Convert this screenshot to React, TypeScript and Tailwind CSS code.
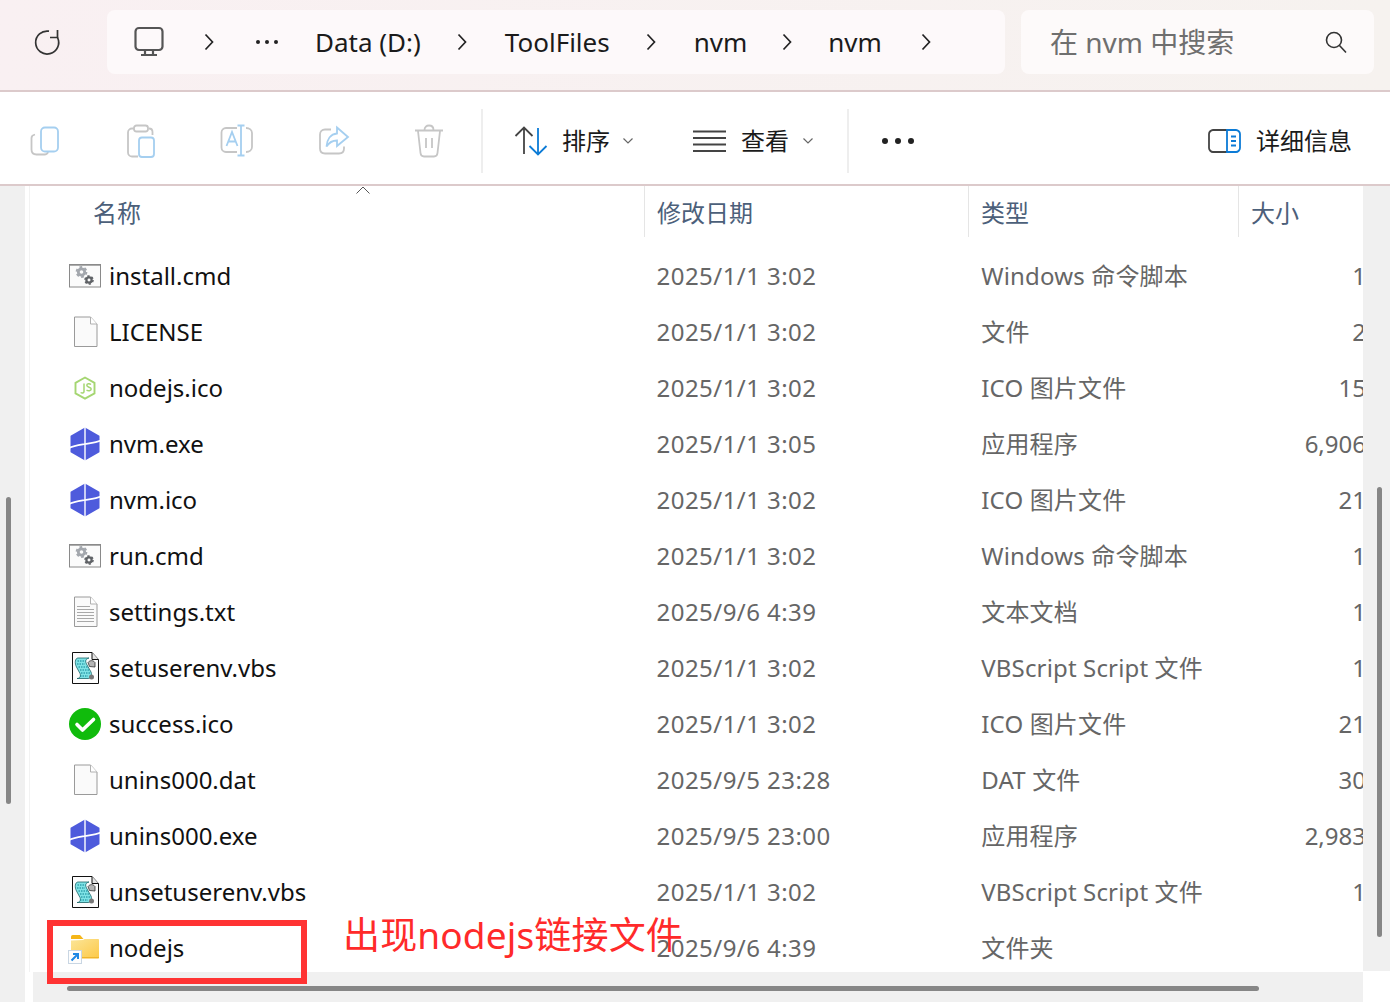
const FONT = "font-['Noto_Sans','Noto_Sans_CJK_SC',sans-serif]";

const files = [
  { name: 'install.cmd', date: '2025/1/1 3:02', type: 'Windows 命令脚本', size: '1', icon: 'cmd' },
  { name: 'LICENSE', date: '2025/1/1 3:02', type: '文件', size: '2', icon: 'blank' },
  { name: 'nodejs.ico', date: '2025/1/1 3:02', type: 'ICO 图片文件', size: '15', icon: 'node' },
  { name: 'nvm.exe', date: '2025/1/1 3:05', type: '应用程序', size: '6,906', icon: 'nvm' },
  { name: 'nvm.ico', date: '2025/1/1 3:02', type: 'ICO 图片文件', size: '21', icon: 'nvm' },
  { name: 'run.cmd', date: '2025/1/1 3:02', type: 'Windows 命令脚本', size: '1', icon: 'cmd' },
  { name: 'settings.txt', date: '2025/9/6 4:39', type: '文本文档', size: '1', icon: 'txt' },
  { name: 'setuserenv.vbs', date: '2025/1/1 3:02', type: 'VBScript Script 文件', size: '1', icon: 'vbs' },
  { name: 'success.ico', date: '2025/1/1 3:02', type: 'ICO 图片文件', size: '21', icon: 'ok' },
  { name: 'unins000.dat', date: '2025/9/5 23:28', type: 'DAT 文件', size: '30', icon: 'blank' },
  { name: 'unins000.exe', date: '2025/9/5 23:00', type: '应用程序', size: '2,983', icon: 'nvm' },
  { name: 'unsetuserenv.vbs', date: '2025/1/1 3:02', type: 'VBScript Script 文件', size: '1', icon: 'vbs' },
  { name: 'nodejs', date: '2025/9/6 4:39', type: '文件夹', size: '', icon: 'link' },
];

function Gear({ x, y, r, fill }: { x: number; y: number; r: number; fill: string }) {
  return (
    <g>
      <circle cx={x} cy={y} r={r * 0.58} fill="none" stroke={fill} strokeWidth={r * 0.5} />
      <circle cx={x} cy={y} r={r * 0.9} fill="none" stroke={fill} strokeWidth={r * 0.34} strokeDasharray={`${r * 0.5} ${r * 0.44}`} />
    </g>
  );
}

function FileIcon({ kind }: { kind: string }) {
  if (kind === 'cmd') {
    return (
      <svg width="34" height="26" viewBox="0 0 34 26">
        <rect x="1.5" y="1.5" width="31" height="22.5" fill="#fbfbfb" stroke="#8a8a8a" />
        <rect x="1.5" y="1.5" width="31" height="1.2" fill="#8a8a8a" />
        <Gear x={13.500} y={9} r={5.500} fill="#a3a7ad" />
        <Gear x={21} y={17} r={4.500} fill="#5f6266" />
      </svg>
    );
  }
  if (kind === 'blank' || kind === 'txt') {
    return (
      <svg width="34" height="32" viewBox="0 0 34 32">
        <path d="M6.500 1h16l6.500 7v22.500h-22.500z" fill="#fafafa" stroke="#9a9a9a" />
        <path d="M22.500 1v7h6.500" fill="#fff" stroke="#b0b0b0" />
        {kind === 'txt' && (
          <path d="M9 10.500h13M9 13.500h17M9 16.500h17M9 19.500h17M9 22.500h17M9 25.500h17" stroke="#a8a8a8" strokeWidth="1" />
        )}
      </svg>
    );
  }
  if (kind === 'node') {
    return (
      <svg width="34" height="26" viewBox="0 0 34 26">
        <path d="M17 2.500l9.500 5.300v10.600l-9.500 5.300-9.500-5.300V7.800z" fill="#fff" stroke="#a5d672" strokeWidth="1.900" />
        <path d="M16 8.500v8c0 1.600-2 2-3.400 1" fill="none" stroke="#a5d672" strokeWidth="1.500" />
        <path d="M23 9.500c-1.500-1.200-4.200-1-4.200.8 0 2.400 4.400 1.400 4.400 3.800 0 1.900-3 2.100-4.700.9" fill="none" stroke="#a5d672" strokeWidth="1.500" />
      </svg>
    );
  }
  if (kind === 'nvm') {
    return (
      <svg width="34" height="34" viewBox="0 0 34 34">
        <path d="M17 1.500l13.500 7.800v15.400l-13.500 7.800-13.500-7.800V9.300z" fill="#4e5bdc" stroke="#4e5bdc" strokeWidth="2" strokeLinejoin="round" />
        <path d="M17 0v34" stroke="#fff" strokeWidth="1.400" />
        <path d="M0 21.500c6-3 11-3.500 17-4.500s11-1.500 17-4" fill="none" stroke="#fff" strokeWidth="1.700" />
      </svg>
    );
  }
  if (kind === 'vbs') {
    return (
      <svg width="34" height="34" viewBox="0 0 34 34">
        <path d="M4.500 1.500h19.500l6.500 7v24h-26z" fill="#fdfdfd" stroke="#111" />
        <path d="M24 1.500v7h6.500" fill="#e4e4e4" stroke="#111" />
        <path d="M10 7h11c-3.500 1-4 3-2.500 6l4.500 8c1.500 3.500-.5 6.500-3 6.500h-11c3 0 4-2.500 3-5l-3.500-6.500c-2-3.500-1.500-9 1.500-9z" fill="#7fe3e6" stroke="#1a6468" strokeWidth="0.800" />
        <path d="M9.500 10h8M9 13h8M10.500 16h9M12 19h9M13 22h9M12 25h8" stroke="#0d8090" strokeWidth="1" strokeDasharray="1.500 1" />
        <path d="M20 11.500c2-2.500 5-2.500 7 0v4.500l-5.500-.5z" fill="#b5b5b5" stroke="#333" strokeWidth="0.800" />
        <circle cx="23.500" cy="26" r="2.500" fill="#777" />
      </svg>
    );
  }
  if (kind === 'ok') {
    return (
      <svg width="34" height="34" viewBox="0 0 34 34">
        <circle cx="17" cy="17" r="16" fill="#10bb0c" />
        <path d="M9 17.500l5.500 5.500 11-10.500" fill="none" stroke="#fff" strokeWidth="3.600" strokeLinecap="round" strokeLinejoin="round" />
      </svg>
    );
  }
  return (
    <svg width="34" height="34" viewBox="0 0 34 34">
      <defs>
        <linearGradient id="folderFill" x1="0" y1="0" x2="1" y2="1">
          <stop offset="0" stopColor="#fbe598" />
          <stop offset="1" stopColor="#fdc947" />
        </linearGradient>
      </defs>
      <path d="M3 6c0-1.200.7-2 1.700-2h7.300l3.500 4h-12.500z" fill="#f5b618" />
      <path d="M3 9.500l12-.5 1.500-1h13.500c.6 0 1 .4 1 1v17c0 1-.6 1.500-1.500 1.500h-25c-1 0-1.500-.6-1.500-1.500z" fill="url(#folderFill)" />
      <path d="M3 26h28v1.200h-28z" fill="#efb42c" />
      <rect x="0.500" y="19.500" width="13" height="13" fill="#fdfdfd" stroke="#c9d6e3" />
      <path d="M3.500 29.500l6-6M5 23h5v5" fill="none" stroke="#1e88e5" strokeWidth="2" />
    </svg>
  );
}

function Chevron() {
  return (
    <svg width="12" height="18" viewBox="0 0 12 18" fill="none" stroke="#222" strokeWidth="1.700">
      <path d="M2.500 1.500l7 7.500-7 7.500" />
    </svg>
  );
}

function SmallCaret() {
  return (
    <svg width="12" height="8" viewBox="0 0 12 8" fill="none" stroke="#666" strokeWidth="1.200">
      <path d="M1.500 1.500l4.500 4.500 4.500-4.500" />
    </svg>
  );
}

function AddressBar() {
  return (
    <div className="flex h-[92px] shrink-0 items-center border-b-2 border-[#dccacb] bg-gradient-to-r from-[#f9f0f2] to-[#f6f2ef] pb-[6px]">
      <div className="flex w-[107px] justify-center pr-[13px]">
        <svg width="28" height="28" viewBox="0 0 28 28" fill="none" stroke="#333" strokeWidth="1.700">
          <path d="M24.500 9.500A11.500 11.500 0 1 1 16 3.200" />
          <path d="M24.500 2v7.500h-7.500" />
        </svg>
      </div>
      <div className="flex h-[64px] w-[898px] items-center rounded-lg bg-[#fdf9fa] text-[26px] text-[#1b1b1b]">
        <svg className="ml-[26px]" width="32" height="32" viewBox="0 0 32 32" fill="none" stroke="#555" strokeWidth="2.200">
          <rect x="2.500" y="2" width="27" height="22" rx="3.500" />
          <path d="M12 24v4M20 24v4M8 29h16" />
        </svg>
        <div className="ml-[38px]"><Chevron /></div>
        <span className="ml-[41px] flex gap-[5px]">
          <i className="size-[4px] rounded-full bg-[#222]" />
          <i className="size-[4px] rounded-full bg-[#222]" />
          <i className="size-[4px] rounded-full bg-[#222]" />
        </span>
        <span className="ml-[37px]">Data (D:)</span>
        <div className="ml-[35px]"><Chevron /></div>
        <span className="ml-[37px]">ToolFiles</span>
        <div className="ml-[35px]"><Chevron /></div>
        <span className="ml-[37px]">nvm</span>
        <div className="ml-[34px]"><Chevron /></div>
        <span className="ml-[35px]">nvm</span>
        <div className="ml-[38px]"><Chevron /></div>
      </div>
      <div className="ml-[16px] flex h-[64px] w-[353px] items-center justify-between rounded-lg bg-[#fdfafa] pl-[29px] pr-[26px] text-[#6f6f6f]">
        <span className="text-[28px]">在 nvm 中搜索</span>
        <svg width="24" height="24" viewBox="0 0 24 24" fill="none" stroke="#333" strokeWidth="1.600">
          <circle cx="10" cy="10" r="7.500" />
          <path d="M15.500 15.500l6.500 7" />
        </svg>
      </div>
    </div>
  );
}

function Toolbar() {
  return (
    <div className="flex h-[94px] shrink-0 items-center border-b-2 border-[#dccacb] bg-white pt-[6px] text-[24px] text-[#1b1b1b]">
      <div className="flex w-[481px] items-center gap-[64px] pl-[30px]">
        <svg className="mr-[2px]" width="30" height="30" viewBox="0 0 30 30" fill="none" strokeWidth="1.800">
          <path d="M5 8.500c-2 .5-3.500 1.500-3.500 3.500v11.500c0 3 2 5 5 5h8c1.500 0 3-.8 3.500-2.500" stroke="#c6c6c6" />
          <rect x="11" y="1.500" width="17" height="24" rx="4" stroke="#a5cff0" />
        </svg>
        <svg width="30" height="34" viewBox="0 0 30 34" fill="none" strokeWidth="1.800">
          <path d="M8 4.500h-2c-2 0-4 1.500-4 4v20c0 2.500 2 4 4 4h6M23 4.500c2 0 3.500 1.500 3.500 3.500v3" stroke="#c6c6c6" />
          <rect x="8" y="1.500" width="14" height="6" rx="2.500" stroke="#c6c6c6" />
          <rect x="13" y="13.500" width="15" height="19.500" rx="3" stroke="#a5cff0" />
        </svg>
        <svg width="34" height="34" viewBox="0 0 34 34" fill="none" strokeWidth="1.800">
          <path d="M17 4h-11c-2.500 0-4.500 2-4.500 4.500v15c0 2.500 2 4.500 4.500 4.500h11M26 4c3.500 0 6 2 6 5v14c0 3-2.500 5-6 5" stroke="#c6c6c6" />
          <path d="M17.500 1.500h7M21 1.500v30M17.500 31.500h7" stroke="#a5cff0" />
          <path d="M6.500 22l5.500-14 5.500 14M8.500 17.500h7" stroke="#a5cff0" />
        </svg>
        <svg width="32" height="32" viewBox="0 0 32 32" fill="none" strokeWidth="1.800">
          <path d="M13 4.500h-6c-3 0-5 2-5 5v14c0 3 2 5 5 5h14c3 0 5-2 5-5v-2" stroke="#c6c6c6" />
          <path d="M19 2.500l11 9.500-11 9v-5.500c-5 0-8 2-10.500 6 .5-7 4-12.500 10.500-13z" stroke="#a5cff0" />
        </svg>
        <svg width="30" height="34" viewBox="0 0 30 34" fill="none" stroke="#c6c6c6" strokeWidth="1.800">
          <path d="M1 6.500h28M10.500 6c0-3 2-4.500 4.500-4.500s4.500 1.500 4.500 4.500M4 7l2.500 22c.2 2 1.500 3.500 3.500 3.500h10c2 0 3.300-1.500 3.500-3.500l2.500-22M12 14v10M18 14v10" />
        </svg>
      </div>
      <div className="h-[64px] w-[2px] bg-[#eeeeee]" />
      <div className="flex w-[364px] items-center">
        <svg className="ml-[31px]" width="34" height="30" viewBox="0 0 34 30" fill="none" strokeWidth="1.800">
          <path d="M10 28v-26M1.500 10l8.500-8.500 8.500 8.500" stroke="#444" />
          <path d="M24 2v26M15.500 20l8.500 8.500 8.500-8.500" stroke="#0c7bd6" />
        </svg>
        <span className="ml-[14px]">排序</span>
        <div className="ml-[12px]"><SmallCaret /></div>
        <svg className="ml-[59px]" width="33" height="22" viewBox="0 0 33 22" fill="none" stroke="#444" strokeWidth="1.800">
          <path d="M0 1.500h33M0 8h33M0 14.500h33M0 21h33" />
        </svg>
        <span className="ml-[15px]">查看</span>
        <div className="ml-[13px]"><SmallCaret /></div>
      </div>
      <div className="h-[64px] w-[2px] bg-[#eeeeee]" />
      <div className="ml-[33px] flex gap-[7px]">
        <i className="size-[6px] rounded-full bg-[#222]" />
        <i className="size-[6px] rounded-full bg-[#222]" />
        <i className="size-[6px] rounded-full bg-[#222]" />
      </div>
      <svg className="ml-auto" width="33" height="24" viewBox="0 0 33 24" fill="none" strokeWidth="1.800">
        <path d="M20 1h-15c-2 0-4 2-4 4v14c0 2 2 4 4 4h15" stroke="#444" />
        <path d="M19 1h9c2 0 4 2 4 4v14c0 2-2 4-4 4h-9zM23 7.500h5M23 12h5M23 16.500h5" stroke="#0c7bd6" />
      </svg>
      <span className="ml-[15px] mr-[38px]">详细信息</span>
    </div>
  );
}

function HeaderCell({ label, className }: { label: string; className: string }) {
  return (
    <div className={`${className} flex h-[51px] items-center border-r border-[#e5e5e5] pt-[3px] text-[24px] text-[#4c607a]`}>
      {label}
    </div>
  );
}

export default function App() {
  return (
    <div className={`${FONT} flex h-[1002px] w-[1390px] flex-col overflow-hidden bg-white`}>
      <AddressBar />
      <Toolbar />
      <div className="relative flex min-h-0 flex-1">
        <div className="w-[25px] bg-[#f0f0f0] pl-[6px] pt-[311px]">
          <div className="h-[307px] w-[5px] rounded-full bg-[#868686]" />
        </div>
        <div className="flex w-[1338px] flex-col pl-[8px]">
          <div className="-ml-[4px] min-h-0 flex-1 overflow-hidden border-l border-[#f2f2f2] pl-[4px]">
            <div className="flex">
              <div className="relative w-[611px]">
                <HeaderCell label="名称" className="w-[611px] pl-[59px]" />
                <svg className="absolute left-[322px] top-[0px]" width="14" height="8" viewBox="0 0 14 8" fill="none" stroke="#555">
                  <path d="M.5 7.500l6.500-6.500 6.500 6.500" />
                </svg>
              </div>
              <HeaderCell label="修改日期" className="w-[324px] pl-[12px]" />
              <HeaderCell label="类型" className="w-[270px] pl-[12px]" />
              <div className="flex h-[51px] items-center pl-[12px] pt-[3px] text-[24px] text-[#4c607a]">大小</div>
            </div>
            <div className="pt-[11px]">
              {files.map((f) => (
                <div key={f.name} className="flex h-[56px] items-center text-[24px]">
                  <div className="flex w-[611px] items-center pl-[34px] text-[#111]">
                    <div className="flex w-[34px] justify-center"><FileIcon kind={f.icon} /></div>
                    <span className="ml-[7px]">{f.name}</span>
                  </div>
                  <div className="w-[324px] pl-[12px] tracking-[0.45px] text-[#666]">{f.date}</div>
                  <div className="w-[257px] whitespace-nowrap pl-[13px] tracking-[0.15px] text-[#666]">{f.type}</div>
                  <div className="w-[138px] overflow-hidden text-right text-[#666]">
                    <span className="-mr-[3px] inline-block">{f.size}</span>
                  </div>
                </div>
              ))}
            </div>
          </div>
          <div className="h-[30px] shrink-0 bg-[#f0f0f0] pl-[34px] pt-[14px]">
            <div className="h-[5px] w-[1192px] rounded-full bg-[#868686]" />
          </div>
        </div>
        <div className="h-[785px] w-[27px] bg-[#f0f0f0] pl-[14px] pt-[301px]">
          <div className="h-[450px] w-[5px] rounded-full bg-[#868686]" />
        </div>
        <div className="absolute left-[47px] top-[734px] h-[64px] w-[260px] border-[6px] border-[#ff3333]" />
        <span className="absolute left-[343px] top-[723px] text-[37px] leading-[52px] tracking-[0.15px] text-[#ff2a2a]">出现nodejs链接文件</span>
      </div>
    </div>
  );
}
